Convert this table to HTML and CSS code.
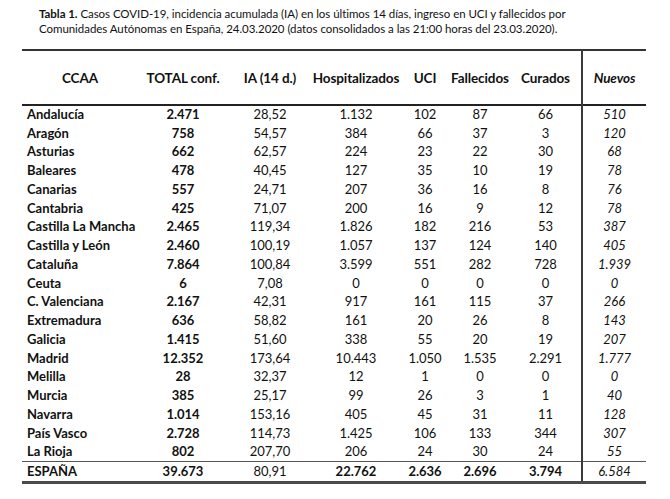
FILE: index.html
```html
<!DOCTYPE html>
<html lang="es">
<head>
<meta charset="utf-8">
<title>Tabla 1</title>
<link rel="stylesheet" href="styles.css">
</head>
<body>
<div class="page">
  <p class="caption"><b>Tabla 1.</b> Casos COVID-19, incidencia acumulada (IA) en los últimos 14 días, ingreso en UCI y fallecidos por<br>Comunidades Autónomas en España, 24.03.2020 (datos consolidados a las 21:00 horas del 23.03.2020).</p>
  <table class="t">
    <colgroup>
      <col class="c-name"><col class="c-total"><col class="c-ia"><col class="c-hosp"><col class="c-uci"><col class="c-fall"><col class="c-cur"><col class="c-new">
    </colgroup>
    <thead>
      <tr><th>CCAA</th><th>TOTAL conf.</th><th>IA (14 d.)</th><th>Hospitalizados</th><th>UCI</th><th>Fallecidos</th><th>Curados</th><th class="new">Nuevos</th></tr>
    </thead>
    <tbody>
      <tr><td class="name">Andalucía</td><td class="b">2.471</td><td>28,52</td><td>1.132</td><td>102</td><td>87</td><td>66</td><td class="new">510</td></tr>
      <tr><td class="name">Aragón</td><td class="b">758</td><td>54,57</td><td>384</td><td>66</td><td>37</td><td>3</td><td class="new">120</td></tr>
      <tr><td class="name">Asturias</td><td class="b">662</td><td>62,57</td><td>224</td><td>23</td><td>22</td><td>30</td><td class="new">68</td></tr>
      <tr><td class="name">Baleares</td><td class="b">478</td><td>40,45</td><td>127</td><td>35</td><td>10</td><td>19</td><td class="new">78</td></tr>
      <tr><td class="name">Canarias</td><td class="b">557</td><td>24,71</td><td>207</td><td>36</td><td>16</td><td>8</td><td class="new">76</td></tr>
      <tr><td class="name">Cantabria</td><td class="b">425</td><td>71,07</td><td>200</td><td>16</td><td>9</td><td>12</td><td class="new">78</td></tr>
      <tr><td class="name">Castilla La Mancha</td><td class="b">2.465</td><td>119,34</td><td>1.826</td><td>182</td><td>216</td><td>53</td><td class="new">387</td></tr>
      <tr><td class="name">Castilla y León</td><td class="b">2.460</td><td>100,19</td><td>1.057</td><td>137</td><td>124</td><td>140</td><td class="new">405</td></tr>
      <tr><td class="name">Cataluña</td><td class="b">7.864</td><td>100,84</td><td>3.599</td><td>551</td><td>282</td><td>728</td><td class="new">1.939</td></tr>
      <tr><td class="name">Ceuta</td><td class="b">6</td><td>7,08</td><td>0</td><td>0</td><td>0</td><td>0</td><td class="new">0</td></tr>
      <tr><td class="name">C. Valenciana</td><td class="b">2.167</td><td>42,31</td><td>917</td><td>161</td><td>115</td><td>37</td><td class="new">266</td></tr>
      <tr><td class="name">Extremadura</td><td class="b">636</td><td>58,82</td><td>161</td><td>20</td><td>26</td><td>8</td><td class="new">143</td></tr>
      <tr><td class="name">Galicia</td><td class="b">1.415</td><td>51,60</td><td>338</td><td>55</td><td>20</td><td>19</td><td class="new">207</td></tr>
      <tr><td class="name">Madrid</td><td class="b">12.352</td><td>173,64</td><td>10.443</td><td>1.050</td><td>1.535</td><td>2.291</td><td class="new">1.777</td></tr>
      <tr><td class="name">Melilla</td><td class="b">28</td><td>32,37</td><td>12</td><td>1</td><td>0</td><td>0</td><td class="new">0</td></tr>
      <tr><td class="name">Murcia</td><td class="b">385</td><td>25,17</td><td>99</td><td>26</td><td>3</td><td>1</td><td class="new">40</td></tr>
      <tr><td class="name">Navarra</td><td class="b">1.014</td><td>153,16</td><td>405</td><td>45</td><td>31</td><td>11</td><td class="new">128</td></tr>
      <tr><td class="name">País Vasco</td><td class="b">2.728</td><td>114,73</td><td>1.425</td><td>106</td><td>133</td><td>344</td><td class="new">307</td></tr>
      <tr><td class="name">La Rioja</td><td class="b">802</td><td>207,70</td><td>206</td><td>24</td><td>30</td><td>24</td><td class="new">55</td></tr>
    </tbody>
    <tfoot>
      <tr><td class="name">ESPAÑA</td><td>39.673</td><td class="reg">80,91</td><td>22.762</td><td>2.636</td><td>2.696</td><td>3.794</td><td class="new">6.584</td></tr>
    </tfoot>
  </table>
</div>
</body>
</html>
```
FILE: styles.css
```css
html, body {
  margin: 0;
  padding: 0;
  background: #ffffff;
}
.page {
  padding: 6px 0 0 22px;
  font-family: "Lato", "Open Sans", sans-serif;
  color: #111111;
}
.caption {
  margin: 0 0 13px 17px;
  font-size: 11.5px;
  line-height: 15px;
  letter-spacing: -0.05px;
}
.t {
  width: 624px;
  border-collapse: collapse;
  table-layout: fixed;
  font-size: 13px;
}
.c-name { width: 116px; }
.c-total { width: 90px; }
.c-ia { width: 84px; }
.c-hosp { width: 88px; }
.c-uci { width: 50px; }
.c-fall { width: 60px; }
.c-cur { width: 72px; }
.c-new { width: 64px; }
.t thead tr {
  height: 55px;
  border-top: 2px solid #333333;
  border-bottom: 2px solid #222222;
}
.t th {
  font-weight: 700;
  font-size: 13.5px;
  text-align: center;
  padding: 0;
  white-space: nowrap;
  letter-spacing: -0.1px;
}
.t th.new {
  font-style: italic;
}
.t tbody tr {
  height: 18.75px;
}
.t td {
  padding: 0;
  text-align: center;
  white-space: nowrap;
  line-height: 15px;
}
.t td.name {
  text-align: left;
  padding-left: 5px;
  font-weight: 700;
}
.t td.b {
  font-weight: 700;
}
.t .new {
  border-left: 2px solid #3a3a3a;
}
.t td.new {
  font-style: italic;
}
.t tfoot tr {
  height: 21px;
  border-top: 1px solid #555555;
  border-bottom: 3px solid #4a4a4a;
  font-weight: 700;
}
.t tfoot td.reg {
  font-weight: 400;
}
.t tfoot td.new {
  font-weight: 400;
}
```
